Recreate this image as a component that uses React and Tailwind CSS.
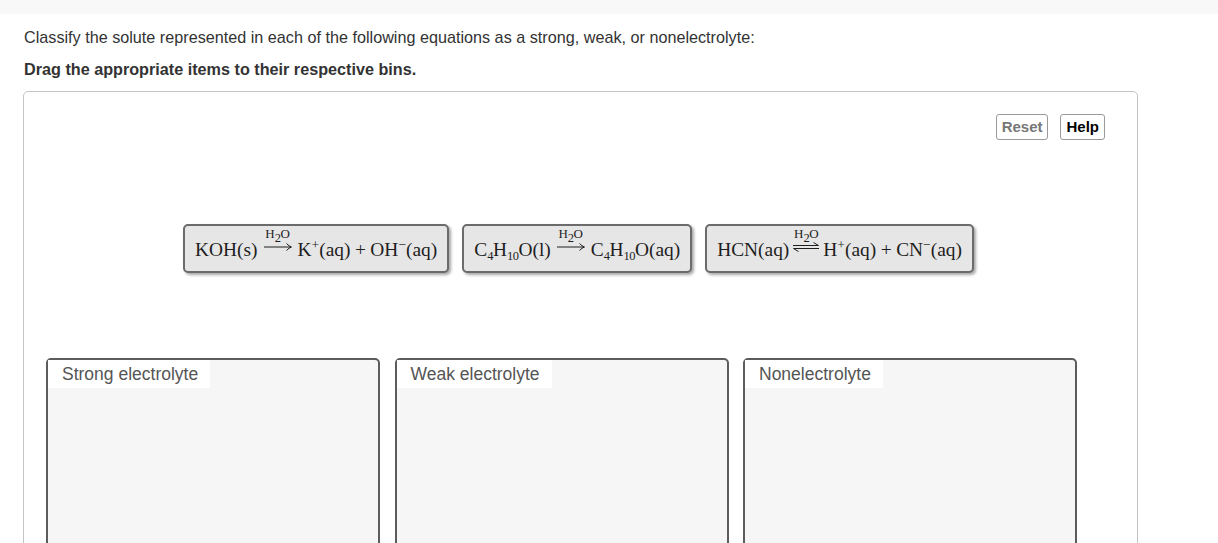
import React from 'react';

// Equation tiles, shown as draggable items (static here)
const Arrow = ({ eq }) => (
  <span className={eq ? 'relative inline-block mx-[4px] align-[0.2em]' : 'relative inline-block mx-[6px] align-[0.2em]'}>
    {eq ? (
      <svg width="26" height="10" viewBox="0 0 26 10" className="block" fill="none" stroke="#1e1e1e" strokeWidth="1">
        <path d="M0 3.5 H25.5 M25.5 3.5 L20.5 0.5" />
        <path d="M0.5 6.5 H26 M0.5 6.5 L5.5 9.5" />
      </svg>
    ) : (
      <svg width="28" height="10" viewBox="0 0 28 10" className="block" fill="none" stroke="#1e1e1e" strokeWidth="1">
        <path d="M0 5 H27" />
        <path d="M22.5 1.5 Q25 4.2 27.5 5 Q25 5.8 22.5 8.5" />
      </svg>
    )}
    <span className="absolute left-1/2 -translate-x-1/2 -top-[15px] text-[13px] leading-none whitespace-nowrap">
      H<Sub>2</Sub>O
    </span>
  </span>
);

const Sup = ({ children }) => (
  <span className="relative -top-[7px] text-[13.5px] leading-none">{children}</span>
);

const Sub = ({ children }) => (
  <span className="relative top-[4px] text-[12.5px] leading-none tracking-[-0.5px]">{children}</span>
);

const Plus = () => <span className="mx-[4.5px]">+</span>;

const Tile = ({ children }) => (
  <div className="h-[49px] flex items-center px-[10px] bg-[#e6e6e6] border-2 border-[#6b6b6b] rounded-[5px] shadow-[2px_2px_3px_rgba(0,0,0,0.35)] text-[19.4px] text-[#1e1e1e] whitespace-nowrap font-['Liberation_Serif','DejaVu_Serif',serif]">
    <span className="pt-[2px]">{children}</span>
  </div>
);

const Bin = ({ label }) => (
  <div className="w-[334px] shrink-0 h-[220px] bg-[#f6f6f6] border-2 border-[#5c5c5c] rounded-t-[5px]">
    <div className="inline-block bg-white h-[28px] pl-[14px] pr-[12px] text-[17.5px] leading-[28px] text-[#555] font-['Liberation_Sans',Arial,sans-serif]">
      {label}
    </div>
  </div>
);

export default function App() {
  return (
    <div className="w-[1218px] h-[543px] overflow-hidden bg-white font-['Liberation_Sans',Arial,sans-serif]">
      <div className="h-[14px] bg-[#f8f8f8]" />
      <div className="pl-[24px] pr-[80px]">
        <p className="mt-[12px] text-[16.2px] leading-[22px] text-[#333]">
          Classify the solute represented in each of the following equations as a strong, weak, or nonelectrolyte:
        </p>
        <p className="mt-[10px] text-[16.2px] leading-[22px] font-bold text-[#333]">
          Drag the appropriate items to their respective bins.
        </p>

        <div className="mt-[11px] -ml-[1px] h-[600px] border border-[#c4c4c4] rounded-[5px]">
          <div className="flex justify-end gap-[12px] pt-[22px] pr-[32px]">
            <button className="h-[26px] px-[5px] border border-[#9a9a9a] rounded-[3px] text-[15px] font-bold text-[#777] bg-white">
              Reset
            </button>
            <button className="h-[26px] px-[5px] border border-[#9a9a9a] rounded-[3px] text-[15px] font-bold text-black bg-white">
              Help
            </button>
          </div>

          <div className="flex justify-center gap-[13px] mt-[84px] pr-[4px]">
            <Tile>
              KOH(s)<Arrow />K<Sup>+</Sup>(aq)<Plus />OH<Sup>−</Sup>(aq)
            </Tile>
            <Tile>
              C<Sub>4</Sub>H<Sub>10</Sub>O(l)<Arrow />C<Sub>4</Sub>H<Sub>10</Sub>O(aq)
            </Tile>
            <Tile>
              HCN(aq)<Arrow eq />H<Sup>+</Sup>(aq)<Plus />CN<Sup>−</Sup>(aq)
            </Tile>
          </div>

          <div className="flex gap-[14.5px] mt-[85px] pl-[22px]">
            <Bin label="Strong electrolyte" />
            <Bin label="Weak electrolyte" />
            <Bin label="Nonelectrolyte" />
          </div>
        </div>
      </div>
    </div>
  );
}
